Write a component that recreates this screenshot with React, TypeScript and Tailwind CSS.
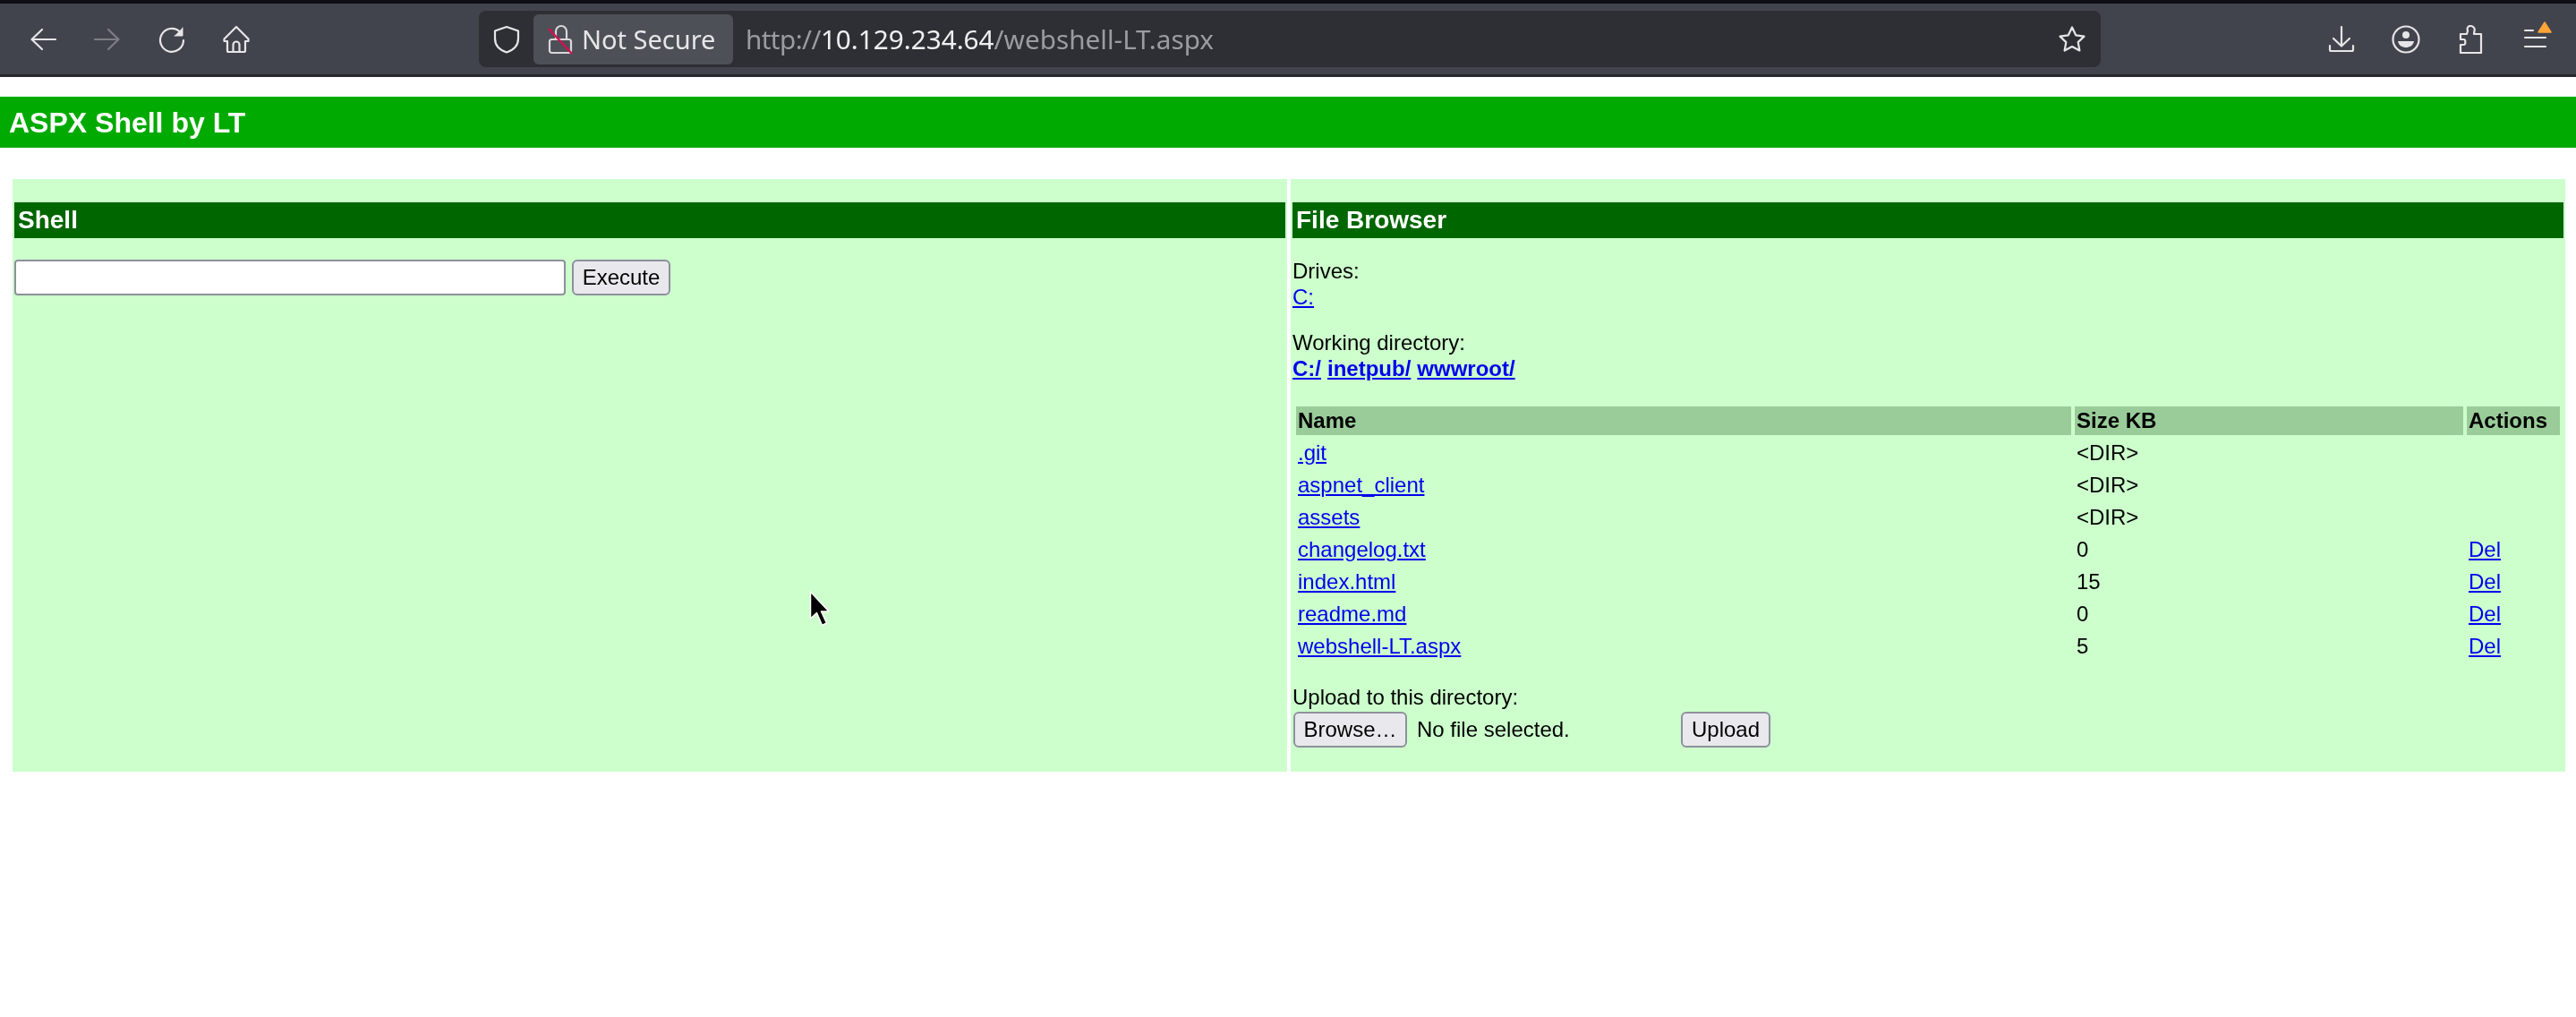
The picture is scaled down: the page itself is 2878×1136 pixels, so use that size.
import React from 'react';

const files = [
  { name: '.git', size: '<DIR>', del: false },
  { name: 'aspnet_client', size: '<DIR>', del: false },
  { name: 'assets', size: '<DIR>', del: false },
  { name: 'changelog.txt', size: '0', del: true },
  { name: 'index.html', size: '15', del: true },
  { name: 'readme.md', size: '0', del: true },
  { name: 'webshell-LT.aspx', size: '5', del: true },
];

function Icon({ children, dim }: { children: React.ReactNode; dim?: boolean }) {
  return (
    <svg
      viewBox="0 0 32 32"
      fill="none"
      stroke="currentColor"
      strokeWidth="2.2"
      strokeLinecap="round"
      strokeLinejoin="round"
      className={`w-[32px] h-[32px] ${dim ? 'text-[#7d7e84]' : 'text-[#e6e6e8]'}`}
    >
      {children}
    </svg>
  );
}

function ToolButton({ children }: { children: React.ReactNode }) {
  return <div className="w-[72px] flex items-center justify-center shrink-0">{children}</div>;
}

function Toolbar() {
  return (
    <div className="border-t-[4px] border-t-[#0e0f14] border-b-[3px] border-b-[#26272c] h-[86px] bg-[#42444d] flex items-center pl-[12px] pr-[10px]">
      <ToolButton>
        <Icon>
          <path d="M30 16H4M15 5 3.500 16 15 27" />
        </Icon>
      </ToolButton>
      <ToolButton>
        <Icon dim>
          <path d="M2 16h26M17 5l11.500 11L17 27" />
        </Icon>
      </ToolButton>
      <ToolButton>
        <Icon>
          <path d="M25 7.500A13 13 0 1 0 29 17" />
          <path d="M28 3v9h-9" fill="currentColor" strokeWidth="1" />
        </Icon>
      </ToolButton>
      <ToolButton>
        <Icon>
          <path d="M16 2 2.500 15.500V18H6v10.500a1.500 1.500 0 0 0 1.500 1.500h17a1.500 1.500 0 0 0 1.500-1.500V18h3.500v-2.500z" />
          <path d="M12.500 30v-8a3.500 3.500 0 0 1 7 0v8" />
        </Icon>
      </ToolButton>

      <div className="ml-[235px] w-[1812px] h-[63px] rounded-[8px] bg-[#2e2f35] flex items-center shrink-0">
        <div className="w-[61px] flex justify-center shrink-0">
          <Icon>
            <path d="M16 2 3 6.500V15c0 8 5.500 13 13 15.500 7.500-2.500 13-7.500 13-15.500V6.500z" />
          </Icon>
        </div>
        <div className="h-[56px] w-[223px] rounded-[6px] bg-[#4e5057] flex items-center shrink-0 pl-[14px]">
          <div className="relative w-[32px] h-[34px] shrink-0">
            <svg viewBox="0 0 32 34" fill="none" stroke="#d8d8da" strokeWidth="2.200" className="w-[32px] h-[34px]">
              <path d="M11 17V8a6 6 0 0 1 12 0v9" />
              <rect x="4" y="17" width="24" height="15" rx="2.500" />
            </svg>
            <svg viewBox="0 0 32 34" className="absolute inset-0 w-[32px] h-[34px]">
              <path d="M3 5 29 33" stroke="#d70f4f" strokeWidth="2.400" />
            </svg>
          </div>
          <span className="ml-[8px] text-[29px] text-[#e6e6e8] font-['Noto_Sans',sans-serif] whitespace-nowrap">
            Not Secure
          </span>
        </div>
        <div className="ml-[14px] pt-[2px] text-[29.700px] text-[#9b9ca1] font-['Noto_Sans',sans-serif] whitespace-nowrap">
          <span className="tracking-[-0.6px]">http://</span>
          <span className="text-[#f0f0f2]">10.129.234.64</span>/webshell-LT.aspx
        </div>
        <div className="ml-auto mr-[16px]">
          <Icon>
            <path d="m16 2.500 4.200 8.800 9.300 1.300-6.800 6.500 1.700 9.400L16 24l-8.400 4.500L9.300 19.100 2.500 12.600l9.300-1.300z" />
          </Icon>
        </div>
      </div>

      <div className="ml-auto flex">
        <ToolButton>
          <Icon>
            <path d="M16 2v21M7 15l9 8.500L25 15M3 23v4.500A1.500 1.500 0 0 0 4.500 29h23a1.500 1.500 0 0 0 1.500-1.500V23" />
          </Icon>
        </ToolButton>
        <ToolButton>
          <Icon>
            <circle cx="16" cy="16" r="14.500" />
            <circle cx="16" cy="11" r="4" fill="currentColor" stroke="none" />
            <path d="M7 18h18c-1 5-5 7-9 7s-8-2-9-7z" fill="currentColor" stroke="none" />
          </Icon>
        </ToolButton>
        <ToolButton>
          <Icon>
            <path d="M16 1c-3 0-4 2.500-3 5.500L12 10H5v6h3.500c2.500 0 2.500 6 0 6H5v9h23V10h-8l.5-3.500C21.500 3.500 19 1 16 1z" />
          </Icon>
        </ToolButton>
        <ToolButton>
          <div className="relative">
            <Icon>
              <path d="M5 6h9M5 14h23M5 24h23" />
            </Icon>
            <svg viewBox="0 0 16 13" className="absolute -top-[4px] right-[-3px] w-[16px] h-[13px]">
              <path d="M8 1 15 12H1z" fill="#ffa436" stroke="#ffa436" strokeWidth="1.500" strokeLinejoin="round" />
            </svg>
          </div>
        </ToolButton>
      </div>
    </div>
  );
}

function PanelHeader({ title }: { title: string }) {
  return (
    <div className="h-[40px] bg-[#006600] flex items-center pl-[4px] text-[28px] font-bold text-white">
      {title}
    </div>
  );
}

function NativeButton({ label, className }: { label: string; className: string }) {
  return (
    <button className={`h-[40px] rounded-[6px] border-2 border-[#8f8f9d] bg-[#e9e9ed] text-black flex items-center justify-center ${className}`}>
      {label}
    </button>
  );
}

function ShellPanel() {
  return (
    <div className="w-[1424px] bg-[#ccffcc] pt-[26px] px-[2px]">
      <PanelHeader title="Shell" />
      <div className="mt-[24px] flex gap-[7px]">
        <input className="w-[616px] h-[40px] rounded-[4px] border-2 border-[#8f8f9d] bg-white" />
        <NativeButton label="Execute" className="w-[110px]" />
      </div>
    </div>
  );
}

function FileBrowserPanel() {
  return (
    <div className="w-[1424px] bg-[#ccffcc] pt-[26px] px-[2px] pb-[27px]">
      <PanelHeader title="File Browser" />
      <div className="mt-[22px] leading-[29px]">
        <div>Drives:</div>
        <a className="text-[#0000ee] underline">C:</a>
      </div>
      <div className="mt-[22px] leading-[29px]">
        <div>Working directory:</div>
        <div className="font-bold text-[#0000ee] flex gap-[7px]">
          <a className="underline">C:/</a>
          <a className="underline">inetpub/</a>
          <a className="underline">wwwroot/</a>
        </div>
      </div>

      <div className="mt-[28px] ml-[4px] grid grid-cols-[866px_434px_104px] gap-x-[4px]">
        <div className="h-[32px] bg-[#99cc99] flex items-center pl-[2px] font-bold">Name</div>
        <div className="h-[32px] bg-[#99cc99] flex items-center pl-[2px] font-bold">Size KB</div>
        <div className="h-[32px] bg-[#99cc99] flex items-center pl-[2px] font-bold">Actions</div>
        <div className="col-span-3 h-[1px]" />
        {files.map((f) => (
          <React.Fragment key={f.name}>
            <div className="h-[36px] flex items-center pl-[2px] pt-[1px]">
              <a className="text-[#0000ee] underline">{f.name}</a>
            </div>
            <div className="h-[36px] flex items-center pl-[2px] pt-[1px]">{f.size}</div>
            <div className="h-[36px] flex items-center pl-[2px] pt-[1px]">
              {f.del && <a className="text-[#0000ee] underline">Del</a>}
            </div>
          </React.Fragment>
        ))}
      </div>

      <div className="mt-[25px] leading-[29px]">Upload to this directory:</div>
      <div className="mt-[2px] flex items-center">
        <NativeButton label="Browse…" className="w-[127px] ml-[1px]" />
        <span className="ml-[11px] w-[295px]">No file selected.</span>
        <NativeButton label="Upload" className="w-[100px] h-[38px]" />
      </div>
    </div>
  );
}

export default function App() {
  return (
    <div className="relative min-h-screen bg-white text-black text-[24px] font-['Liberation_Sans',Arial,sans-serif] overflow-hidden blur-[0.7px]">
      <Toolbar />
      <div className="mt-[22px] h-[57px] bg-[#00aa00] flex items-center pl-[10px] text-[32px] font-bold text-white">
        ASPX Shell by LT
      </div>
      <div className="mt-[35px] pl-[14px] flex gap-[4px] items-stretch">
        <ShellPanel />
        <FileBrowserPanel />
      </div>
      {/* mouse pointer left in the capture */}
      <svg viewBox="0 0 24 40" className="absolute left-[904px] top-[660px] w-[24px] h-[40px]">
        <path d="M1.500 1V31l7-6.500 6 14 5-2.500-6-13H22z" fill="#000" stroke="#fff" strokeWidth="1.500" strokeLinejoin="round" />
      </svg>
    </div>
  );
}
